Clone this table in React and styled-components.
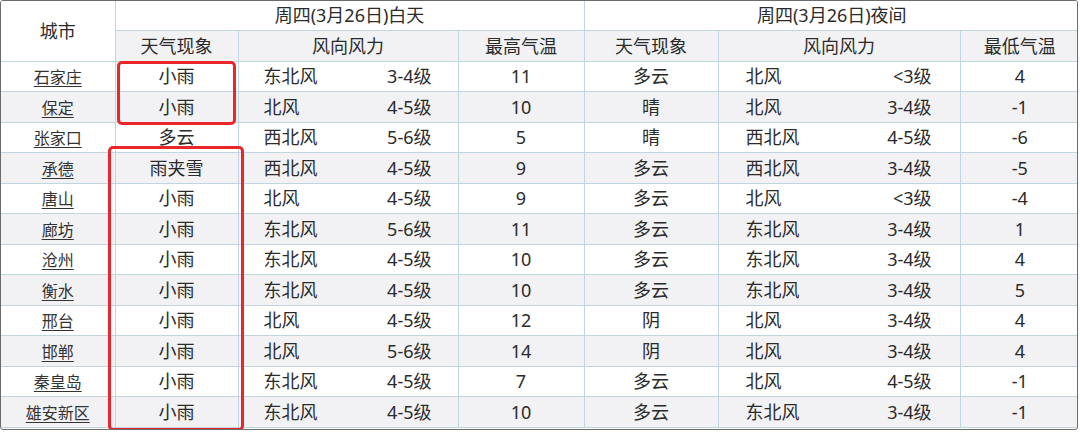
import styled, { createGlobalStyle } from 'styled-components'

const GlobalStyle = createGlobalStyle`
  html, body {
    margin: 0;
    padding: 0;
    background: #ffffff;
  }
`

const rows = [
  ['石家庄', '小雨', '东北风', '3-4级', '11', '多云', '北风', '<3级', '4'],
  ['保定', '小雨', '北风', '4-5级', '10', '晴', '北风', '3-4级', '-1'],
  ['张家口', '多云', '西北风', '5-6级', '5', '晴', '西北风', '4-5级', '-6'],
  ['承德', '雨夹雪', '西北风', '4-5级', '9', '多云', '西北风', '3-4级', '-5'],
  ['唐山', '小雨', '北风', '4-5级', '9', '多云', '北风', '<3级', '-4'],
  ['廊坊', '小雨', '东北风', '5-6级', '11', '多云', '东北风', '3-4级', '1'],
  ['沧州', '小雨', '东北风', '4-5级', '10', '多云', '东北风', '3-4级', '4'],
  ['衡水', '小雨', '东北风', '4-5级', '10', '多云', '东北风', '3-4级', '5'],
  ['邢台', '小雨', '北风', '4-5级', '12', '阴', '北风', '3-4级', '4'],
  ['邯郸', '小雨', '北风', '5-6级', '14', '阴', '北风', '3-4级', '4'],
  ['秦皇岛', '小雨', '东北风', '4-5级', '7', '多云', '北风', '4-5级', '-1'],
  ['雄安新区', '小雨', '东北风', '4-5级', '10', '多云', '东北风', '3-4级', '-1'],
]

const widths = [114, 123, 220, 126, 134, 242, 119]

const Frame = styled.div`
  position: relative;
  width: 1078px;
  height: 430px;
  box-sizing: border-box;
  border: 1px solid #6b6b6b;
  border-radius: 3px;
  overflow: hidden;
  font-family: "Noto Sans", "Noto Sans CJK SC", sans-serif;
  color: #2b2b2b;
`

const Table = styled.table`
  width: 1076px;
  border-collapse: collapse;
  table-layout: fixed;
`

const HeadRow = styled.tr`
  height: ${(p) => p.$h}px;
  background: ${(p) => (p.$shade ? '#f2f2f5' : '#ffffff')};
`

const Row = styled.tr`
  height: 30.5px;
  background: ${(p) => (p.$shade ? '#f2f2f5' : '#ffffff')};
`

const Th = styled.th`
  font-weight: normal;
  font-size: 18px;
  line-height: 1;
  text-align: center;
  padding: 0;
  border: 1px solid #c0d6df;
  border-top: none;
  &:first-child { border-left: none; }
  &:last-child { border-right: none; }
`

const Td = styled.td`
  font-size: 18px;
  line-height: 1;
  text-align: center;
  padding: 0;
  border: 1px solid #c0d6df;
  &:first-child { border-left: none; }
  &:last-child { border-right: none; }
`

const City = styled.span`
  font-size: 16px;
  text-decoration: underline;
  text-underline-offset: 3px;
  color: #333;
`

const Wind = styled.div`
  display: flex;
  justify-content: space-between;
  padding: 0 ${(p) => p.$pr}px 0 ${(p) => p.$pl}px;
`

const Mark = styled.div`
  position: absolute;
  left: ${(p) => p.$x}px;
  top: ${(p) => p.$y}px;
  width: ${(p) => p.$w}px;
  height: ${(p) => p.$h}px;
  box-sizing: border-box;
  border: 3px solid #e8262b;
  border-radius: 5px;
  pointer-events: none;
`

export default function App () {
  return (
    <>
      <GlobalStyle />
      <Frame>
        <Table>
          <colgroup>
            {widths.map((w, i) => <col key={i} style={{ width: w }} />)}
          </colgroup>
          <thead>
            <HeadRow $h={29}>
              <Th rowSpan={2}>城市</Th>
              <Th colSpan={3}>周四(3月26日)白天</Th>
              <Th colSpan={3}>周四(3月26日)夜间</Th>
            </HeadRow>
            <HeadRow $h={31} $shade>
              <Th>天气现象</Th>
              <Th>风向风力</Th>
              <Th>最高气温</Th>
              <Th>天气现象</Th>
              <Th>风向风力</Th>
              <Th>最低气温</Th>
            </HeadRow>
          </thead>
          <tbody>
            {rows.map((r, i) => (
              <Row key={r[0]} $shade={i % 2 === 1}>
                <Td><City>{r[0]}</City></Td>
                <Td>{r[1]}</Td>
                <Td>
                  <Wind $pl={25} $pr={26}><span>{r[2]}</span><span>{r[3]}</span></Wind>
                </Td>
                <Td>{r[4]}</Td>
                <Td>{r[5]}</Td>
                <Td>
                  <Wind $pl={27} $pr={28}><span>{r[6]}</span><span>{r[7]}</span></Wind>
                </Td>
                <Td>{r[8]}</Td>
              </Row>
            ))}
          </tbody>
        </Table>
        <Mark $x={116} $y={60} $w={119} $h={64} />
        <Mark $x={107} $y={145} $w={136} $h={285} />
      </Frame>
    </>
  )
}
